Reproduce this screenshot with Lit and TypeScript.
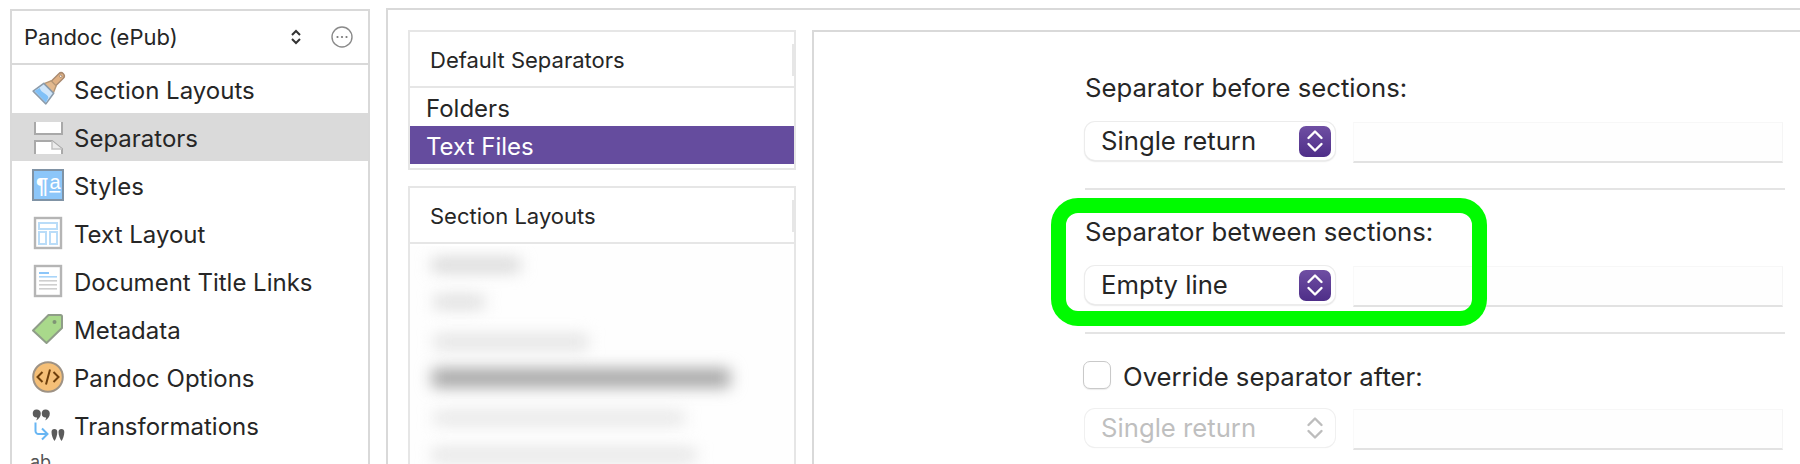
import { LitElement, html, css, svg } from "lit";
import { customElement } from "lit/decorators.js";

const brush = svg`<g transform="rotate(45 16 16)">
  <path d="M12.800 9 V-2.500 a3.200 3.200 0 0 1 6.400 0 V9 Z" fill="#e0b184" stroke="#a98a70" stroke-width="1.4"/>
  <circle cx="16" cy="-2" r="1.2" fill="#fff" stroke="#8f7660" stroke-width=".7"/>
  <path d="M9.500 15 L12.500 8 H19.500 L22.500 15 Z" fill="#e3b98e" stroke="#b59675" stroke-width="1.4"/>
  <path d="M9 15 H23 L25 28 H7 Z" fill="#cfe6fb" stroke="#8b9baa" stroke-width="1.6" stroke-linejoin="round"/>
  <path d="M8 27 L9.500 21 C14 24 19 19 22.500 22 L24 27 Z" fill="#7fc0f7"/>
</g>`;

const sepIcon = svg`
  <path d="M3 1 V13 H30 V1" fill="#fff" stroke="#a9a9a9" stroke-width="2"/>
  <path d="M3 33 V20 H20 L30 28 V33" fill="#fff" stroke="#a9a9a9" stroke-width="2"/>
  <path d="M20 20 V28 H30" fill="#ececec" stroke="#c2c2c2" stroke-width="1.500"/>`;

const stylesIcon = svg`
  <rect x="1" y="1" width="30" height="30" fill="#8cc6f9" stroke="#8093a5" stroke-width="2"/>
  <text x="10" y="24" font-family="'Liberation Sans',sans-serif" font-size="22" font-weight="700" fill="#fff" text-anchor="middle">¶</text>
  <text x="23" y="19.500" font-family="'Liberation Sans',sans-serif" font-size="20" fill="#fff" text-anchor="middle">a</text>
  <rect x="17.500" y="22" width="11" height="1.600" fill="#fff"/>`;

const layoutIcon = svg`
  <rect x="3" y="1" width="26" height="30" fill="#fff" stroke="#b5b5b5" stroke-width="2.400"/>
  <g fill="#fff" stroke="#b9dcf8" stroke-width="2">
    <rect x="7" y="6" width="18" height="6"/>
    <rect x="7" y="15" width="7" height="12"/>
    <rect x="18" y="15" width="7" height="12"/>
  </g>`;

const docIcon = svg`
  <rect x="3" y="1" width="26" height="30" fill="#fff" stroke="#b5b5b5" stroke-width="2.400"/>
  <rect x="7" y="7" width="10" height="2" fill="#8cc6f9"/>
  <rect x="7" y="11" width="18" height="1.600" fill="#a9d5f9"/>
  <rect x="7" y="15" width="18" height="1.600" fill="#cfcfcf"/>
  <rect x="7" y="19" width="18" height="1.600" fill="#cfcfcf"/>
  <rect x="7" y="23" width="18" height="1.600" fill="#cfcfcf"/>`;

const tagIcon = svg`
  <path d="M1 17.500 L16.500 2 H28.500 a1.500 1.500 0 0 1 1.500 1.500 V15 L14.500 30 Z" fill="#a9d98b" stroke="#8f9d88" stroke-width="2" stroke-linejoin="round"/>
  <circle cx="22.500" cy="9" r="2" fill="#7f9475"/>`;

const codeIcon = svg`
  <circle cx="16" cy="16" r="14.800" fill="#f5bf77" stroke="#9e9284" stroke-width="2"/>
  <path d="M10.500 11 L5.500 16 L10.500 21 M21.500 11 L26.500 16 L21.500 21 M18 8.500 L14 23.500" fill="none" stroke="#6e3f0c" stroke-width="2"/>`;

const transIcon = svg`
  <g fill="#5b5b5b">
    <path d="M4.500 0.500 a4 4 0 0 1 4.300 4 C8.800 7.500 7 10 4 11.500 C5 9.800 5.400 9 5 8.500 a4 4 0 0 1 -.5 -8Z"/>
    <path d="M13.500 0.500 a4 4 0 0 1 4.300 4 C17.800 7.500 16 10 13 11.500 C14 9.800 14.400 9 14 8.500 a4 4 0 0 1 -.5 -8Z"/>
    <path d="M19.500 23 a2.900 2.900 0 0 1 5.800 0 C25.300 26 24 30 22.500 32 C21 30 19.500 26 19.500 23Z"/>
    <path d="M26.500 23 a2.900 2.900 0 0 1 5.800 0 C32.300 26 31 30 29.500 32 C28 30 26.500 26 26.500 23Z"/>
  </g>
  <path d="M3.500 13.500 V22 a3 3 0 0 0 3 3 H14 M10 19.500 L15.500 25 L10 30.500" fill="none" stroke="#68b6f3" stroke-width="2"/>`;

const items = [
  { label: "Section Layouts", icon: brush },
  { label: "Separators", icon: sepIcon, selected: true },
  { label: "Styles", icon: stylesIcon },
  { label: "Text Layout", icon: layoutIcon },
  { label: "Document Title Links", icon: docIcon },
  { label: "Metadata", icon: tagIcon },
  { label: "Pandoc Options", icon: codeIcon },
  { label: "Transformations", icon: transIcon },
];

const blurred = [
  { left: 22, top: 13, w: 88, c: "#d0d0d0", h: 12 },
  { left: 24, top: 25, w: 50, c: "#d8d8d8", h: 12 },
  { left: 24, top: 27, w: 154, c: "#e0e0e0", h: 14 },
  { left: 22, top: 20, w: 298, c: "#a0a0a0", h: 18 },
  { left: 24, top: 25, w: 250, c: "#e2e2e2", h: 12 },
  { left: 22, top: 25, w: 264, c: "#e0e0e0", h: 12 },
];

const chevrons = (color: string, w: number) => svg`<path d="M3.500 9 L10 2.500 L16.500 9 M3.500 15 L10 21.500 L16.500 15" fill="none" stroke=${color} stroke-width=${w} stroke-linecap="round" stroke-linejoin="round"/>`;

@customElement("app-root")
export class AppRoot extends LitElement {
  static styles = css`
    :host {
      display: flex;
      position: relative;
      width: 1800px;
      height: 464px;
      overflow: hidden;
      background: #fff;
      font-family: Inter, "Noto Sans", sans-serif;
      color: #262626;
      box-sizing: border-box;
      padding-left: 10px;
    }
    * { box-sizing: border-box; }
    svg { display: block; overflow: visible; }

    .sidebar {
      width: 360px;
      height: 600px;
      flex: none;
      margin-top: 9px;
      border: 2px solid #d9d9d9;
    }
    .side-head {
      height: 54px;
      border-bottom: 2px solid #d9d9d9;
      display: flex;
      align-items: center;
      padding: 0 15px 0 12px;
      font-size: 22px;
    }
    .side-head .name { flex: 1; }
    .stepper { width: 12px; height: 16px; margin-right: 29px; }
    .more { width: 22px; height: 22px; }
    .row {
      height: 48px;
      display: flex;
      align-items: center;
      gap: 10px;
      padding-left: 20px;
      font-size: 24px;
    }
    .row span { padding-top: 2px; }
    .row.selected { background: #dadada; }
    .row svg { width: 32px; height: 32px; flex: none; }
    .ab {
      padding: 4px 0 0 18px;
      font-size: 18px;
      color: #555;
      line-height: 18px;
    }

    .main {
      flex: 1;
      margin: 8px 0 0 16px;
      border-top: 2px solid #d9d9d9;
      border-left: 2px solid #d9d9d9;
      padding: 20px 0 0 20px;
      display: flex;
      gap: 16px;
      min-width: 0;
    }
    .lists { width: 388px; flex: none; display: flex; flex-direction: column; gap: 16px; }
    .list { border: 2px solid #e6e6e6; flex: none; }
    .list.first { height: 140px; }
    .list.second { height: 400px; }
    .list-head {
      height: 56px;
      display: flex;
      align-items: center;
      padding: 2px 0 0 20px;
      border-bottom: 2px solid #e6e6e6;
      font-size: 22px;
      position: relative;
    }
    .list-head .tick {
      position: absolute;
      right: 0;
      top: 12px;
      width: 2px;
      height: 32px;
      background: #e6e6e6;
    }
    .list-row {
      height: 38px;
      display: flex;
      align-items: center;
      padding: 3px 0 0 16px;
      font-size: 24px;
    }
    .list-row.selected { background: #654c9e; color: #fff; }
    .blur-area {
      margin: 2px 4px 0 0;
      background: #fefefe;
      height: 300px;
      overflow: hidden;
      display: flex;
      flex-direction: column;
    }
    .blur-bar { filter: blur(8px); flex: none; }

    .pane {
      flex: 1;
      min-width: 0;
      border-top: 2px solid #d9d9d9;
      border-left: 2px solid #d9d9d9;
      padding: 42px 0 0 271px;
    }
    .form { width: 700px; }
    .label { height: 28px; line-height: 28px; font-size: 25.7px; }
    .control { display: flex; gap: 18px; height: 41px; margin-top: 20px; }
    .popup {
      width: 250px;
      height: 38px;
      flex: none;
      border-radius: 10px;
      background: #fff;
      box-shadow: 0 0 0 1px #ececec, 0 1px 2px rgba(0, 0, 0, .28);
      display: flex;
      align-items: center;
      padding: 0 4px 0 16px;
      font-size: 25.7px;
    }
    .popup .txt { flex: 1; padding-bottom: 2px; }
    .popup.disabled { color: #bfbfbf; box-shadow: 0 0 0 1px #f0f0f0, 0 1px 1px rgba(0, 0, 0, .1); }
    .pop-btn {
      width: 32px;
      height: 31px;
      border-radius: 7px;
      background: linear-gradient(#6f4fa3, #4e2e88);
      display: flex;
      align-items: center;
      justify-content: center;
    }
    .pop-btn svg { width: 20px; height: 24px; }
    .pop-plain { width: 32px; height: 31px; display: flex; align-items: center; justify-content: center; }
    .pop-plain svg { width: 20px; height: 24px; }
    .field {
      flex: 1;
      background: #fefefe;
      border-top: 1px solid #f7f7f7;
      border-right: 1px solid #f5f5f5;
      border-left: 1px solid #f9f9f9;
      border-bottom: 2px solid #e2e2e2;
      margin-right: 2px;
    }
    .hr { height: 2px; background: #e4e4e4; margin: 25px 0 28px; }
    .check-row { display: flex; align-items: center; gap: 12px; height: 28px; margin: -1px 0 0 -2px; font-size: 25.7px; }
    .check-row .check-text { padding-top: 3px; }
    .check {
      width: 28px;
      height: 28px;
      border-radius: 7px;
      background: #fff;
      border: 1px solid #c9c9c9;
      box-shadow: 0 1px 1px rgba(0, 0, 0, .08);
      flex: none;
    }
    .highlight {
      position: absolute;
      left: 1051px;
      top: 198px;
      width: 436px;
      height: 128px;
      border: 15px solid #00fb00;
      border-radius: 27px;
      pointer-events: none;
    }
  `;

  private popup(text: string) {
    return html`<div class="popup">
      <span class="txt">${text}</span>
      <span class="pop-btn"><svg viewBox="0 0 20 24">${chevrons("#fff", 2.4)}</svg></span>
    </div>`;
  }

  render() {
    return html`
      <aside class="sidebar">
        <div class="side-head">
          <span class="name">Pandoc (ePub)</span>
          <svg class="stepper" viewBox="0 0 12 16"><path d="M2 6 L6 2 L10 6 M2 10 L6 14 L10 10" fill="none" stroke="#333" stroke-width="2"/></svg>
          <svg class="more" viewBox="0 0 22 22">
            <circle cx="11" cy="11" r="10" fill="none" stroke="#8a8a8a" stroke-width="1.400"/>
            <circle cx="6.500" cy="11" r="1.100" fill="#777"/><circle cx="11" cy="11" r="1.100" fill="#777"/><circle cx="15.500" cy="11" r="1.100" fill="#777"/>
          </svg>
        </div>
        ${items.map(
          (i) => html`<div class="row ${i.selected ? "selected" : ""}">
            <svg viewBox="0 0 32 32">${i.icon}</svg><span>${i.label}</span>
          </div>`
        )}
        <div class="ab">ab</div>
      </aside>

      <section class="main">
        <div class="lists">
          <div class="list first">
            <div class="list-head">Default Separators<span class="tick"></span></div>
            <div class="list-row">Folders</div>
            <div class="list-row selected">Text Files</div>
          </div>
          <div class="list second">
            <div class="list-head">Section Layouts<span class="tick"></span></div>
            <div class="blur-area">
              ${blurred.map(
                (b) => html`<div class="blur-bar" style="margin-left:${b.left}px;margin-top:${b.top}px;width:${b.w}px;height:${b.h}px;background:${b.c}"></div>`
              )}
            </div>
          </div>
        </div>

        <div class="pane">
          <div class="form">
            <div class="label">Separator before sections:</div>
            <div class="control">${this.popup("Single return")}<div class="field"></div></div>
            <div class="hr"></div>
            <div class="label">Separator between sections:</div>
            <div class="control">${this.popup("Empty line")}<div class="field"></div></div>
            <div class="hr"></div>
            <div class="check-row"><span class="check"></span><span class="check-text">Override separator after:</span></div>
            <div class="control">
              <div class="popup disabled">
                <span class="txt">Single return</span>
                <span class="pop-plain"><svg viewBox="0 0 20 24">${chevrons("#bdbdbd", 2.4)}</svg></span>
              </div>
              <div class="field"></div>
            </div>
          </div>
        </div>
      </section>
      <div class="highlight"></div>
    `;
  }
}
